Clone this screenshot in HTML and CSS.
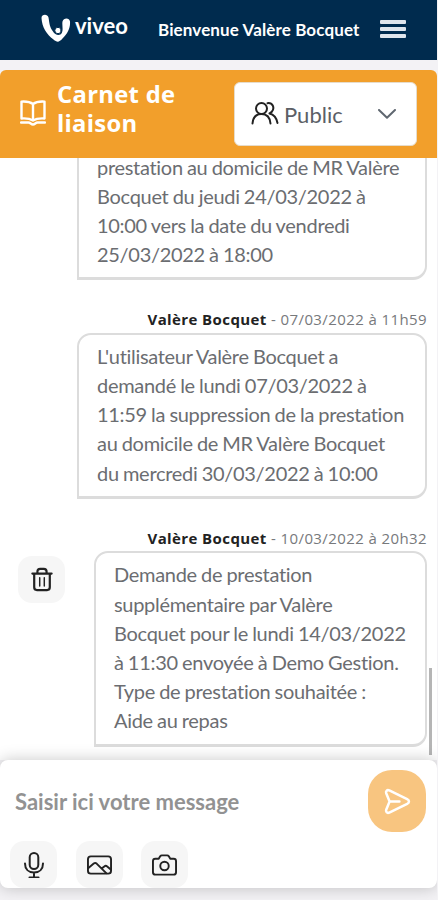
FILE: index.html
```html
<!DOCTYPE html>
<html lang="fr">
<head>
    <meta charset="UTF-8">
    <meta name="viewport" content="width=device-width, initial-scale=1.0">
    <title>Carnet de liaison</title>
    <link rel="stylesheet" href="styles.css">
</head>
<body>
    <div class="app">
        <header class="topbar">
            <div class="logo">
                <svg class="logo-mark" viewBox="0 0 30 28">
                    <path d="M0.500 4C0.500 0 6.500 -0.500 7.500 3.500C8.500 9 8.500 13 12 17.500C14 21.500 19.500 22 20.800 19C22.500 15.500 20.800 11 21.500 7.500C22.500 3.500 28.500 3.500 29 7.500C29.500 14 26.500 19.500 21.500 24.500C18 28.500 16 28.500 12.500 25.500C5.500 20.500 1 13 0.500 4Z"/>
                    <circle cx="17" cy="16.500" r="3.200"/>
                </svg>
                <span class="logo-text">viveo</span>
            </div>
            <span class="welcome">Bienvenue Valère Bocquet</span>
            <div class="burger"><i></i><i></i><i></i></div>
        </header>

        <section class="titlebar">
            <svg class="book" viewBox="0 0 26 26">
                <path d="M13 4C10 1.800 6 1.300 1.500 1.600V18.500C6 18.200 10 18.600 13 20.500C16 18.600 20 18.200 24.500 18.500V1.600C20 1.300 16 1.800 13 4V20"/>
                <path d="M1 22.500H8.500C10.500 22.500 11 24.500 13 24.500S15.500 22.500 17.500 22.500H25"/>
            </svg>
            <h1>Carnet de liaison</h1>
            <div class="select">
                <svg class="users" viewBox="0 0 28 24">
                    <circle cx="10.500" cy="7.500" r="5.500"/>
                    <path d="M1.500 22.500C2 17 5 13 10.500 13S19 17 19.500 22.500M16.500 2.200C21.500 1.500 24 6.500 21 10.500C20 11.700 19.500 12 18.500 12.500C23 13.500 25.500 17 26.500 22"/>
                </svg>
                <span>Public</span>
                <svg class="chevron" viewBox="0 0 18 10"><path d="M1 1L9 8.800L17 1"/></svg>
            </div>
        </section>

        <main class="messages">
            <div class="bubble">
                prestation au domicile de MR Valère<br>
                Bocquet du jeudi 24/03/2022 à<br>
                10:00 vers la date du vendredi<br>
                25/03/2022 à 18:00
            </div>

            <div class="meta"><b>Valère Bocquet</b> <span>- 07/03/2022 à 11h59</span></div>
            <div class="bubble">
                L'utilisateur Valère Bocquet a<br>
                demandé le lundi 07/03/2022 à<br>
                11:59 la suppression de la prestation<br>
                au domicile de MR Valère Bocquet<br>
                du mercredi 30/03/2022 à 10:00
            </div>

            <div class="meta"><b>Valère Bocquet</b> <span>- 10/03/2022 à 20h32</span></div>
            <div class="row">
                <button class="tool">
                    <svg class="trash" viewBox="0 0 24 26">
                        <path d="M1.500 6.500H22.500M3.500 6.500V21.500C3.500 23.500 4.500 24.500 6.500 24.500H17.500C19.500 24.500 20.500 23.500 20.500 21.500V6.500M7 6V4.500C7 2.500 8 1.500 10 1.500H14C16 1.500 17 2.500 17 4.500V6"/>
                        <path class="thin" d="M9.500 11V20M14.500 11V20"/>
                    </svg>
                </button>
                <div class="bubble">
                    Demande de prestation<br>
                    supplémentaire par Valère<br>
                    Bocquet pour le lundi 14/03/2022<br>
                    à 11:30 envoyée à Demo Gestion.<br>
                    Type de prestation souhaitée :<br>
                    Aide au repas
                </div>
            </div>
            <div class="scrollbar"></div>
        </main>

        <footer class="composer">
            <div class="input-row">
                <span class="placeholder">Saisir ici votre message</span>
                <button class="send">
                    <svg viewBox="0 0 28 28">
                        <path d="M5.500 2.500L24 11.500C26.500 12.800 26.500 15.200 24 16.500L5.500 25.500C3 26.500 1.500 24.500 2.300 22.500L5.800 14L2.300 5.500C1.500 3.500 3 1.500 5.500 2.500ZM6 14H16"/>
                    </svg>
                </button>
            </div>
            <div class="tools">
                <button class="tool">
                    <svg class="mic" viewBox="0 0 20 26">
                        <rect x="5.700" y="1" width="8.600" height="16" rx="4.300"/>
                        <path d="M1 11.500C1 17 4.500 20.500 10 20.500S19 17 19 11.500M10 20.500V25M5.500 25.500H14.500"/>
                    </svg>
                </button>
                <button class="tool">
                    <svg class="image" viewBox="0 0 26 20">
                        <rect x="1" y="1" width="24" height="18" rx="3"/>
                        <path d="M1.500 13L7 8.500C8 7.700 9 7.700 10 8.500L20 18.500M15.500 13.500L18 11.500C19 10.700 20 10.700 21 11.500L25 15"/>
                    </svg>
                </button>
                <button class="tool">
                    <svg class="camera" viewBox="0 0 26 22">
                        <path d="M1 7C1 5.500 2 4.500 3.500 4.500H7L8.500 2C9 1.300 9.500 1 10.200 1H15.800C16.500 1 17 1.300 17.500 2L19 4.500H22.500C24 4.500 25 5.500 25 7V18.500C25 20 24 21 22.500 21H3.500C2 21 1 20 1 18.500Z"/>
                        <circle cx="13" cy="12" r="4.400"/>
                    </svg>
                </button>
            </div>
        </footer>
    </div>
</body>
</html>
```

FILE: styles.css
```css
* {
    box-sizing: border-box;
}
body {
    margin: 0;
    background-color: #f3f2f5;
    font-family: Lato, sans-serif;
}
svg {
    display: block;
    flex: none;
    fill: none;
    stroke: #222;
    stroke-width: 2;
    stroke-linecap: round;
    stroke-linejoin: round;
}
button {
    border: 0;
    padding: 0;
    display: flex;
    align-items: center;
    justify-content: center;
}
.app {
    width: 437px;
    height: 900px;
    display: flex;
    flex-direction: column;
    overflow: hidden;
}

/* top bar */
.topbar {
    height: 60px;
    flex: none;
    display: flex;
    align-items: center;
    padding: 0 31px 0 41px;
    background-color: #002b4e;
    color: #fff;
}
.logo {
    display: flex;
    width: 117px;
    padding-bottom: 4px;
}
.logo-mark {
    width: 30px;
    height: 28px;
    stroke: none;
    fill: #fff;
}
.logo-mark circle {
    stroke: #002b4e;
    stroke-width: 1;
}
.logo-text {
    margin: 1px 0 0 4px;
    font-size: 22px;
    line-height: 22px;
    font-weight: 700;
}
.welcome {
    font-size: 17px;
    font-weight: 700;
    letter-spacing: 0.120px;
    margin-top: -1px;
    white-space: nowrap;
}
.burger {
    width: 26px;
    margin: -2px 0 0 auto;
    display: flex;
    flex-direction: column;
    gap: 3px;
}
.burger i {
    height: 4px;
    border-radius: 1px;
    background-color: #dfe5ec;
}

/* title */
.titlebar {
    height: 88px;
    flex: none;
    margin-top: 10px;
    padding: 0 20px;
    display: flex;
    align-items: center;
    background-color: #f29f2b;
    border-radius: 6px 6px 0 0;
}
.book {
    width: 26px;
    height: 26px;
    margin-top: -2px;
    stroke: #fff;
    stroke-width: 2.400;
}
.titlebar h1 {
    width: 177px;
    margin: -10px 0 0 11px;
    padding-right: 40px;
    color: #fff;
    font: 700 23.800px/29px "Open Sans", sans-serif;
    letter-spacing: 0.300px;
}
.select {
    width: 183px;
    height: 64px;
    display: flex;
    align-items: center;
    padding: 0 20px 0 16px;
    border-radius: 6px;
    background-color: #fff;
    border: 1px solid #e6dccb;
    color: #5c5f66;
    font-size: 22px;
}
.users {
    width: 28px;
    height: 24px;
    margin: -3px 5px 0 0;
}
.chevron {
    width: 18px;
    height: 10px;
    margin-left: auto;
    stroke: #5f6770;
}

/* messages */
.messages {
    position: relative;
    height: 602px;
    flex: none;
    padding: 0 10px;
    display: flex;
    flex-direction: column;
    align-items: flex-end;
    background-color: #fff;
    overflow: hidden;
}
.bubble {
    width: 350px;
    flex: none;
    padding: 7px 0 8px 18px;
    border: 2px solid #dcdcdc;
    border-bottom-width: 3px;
    border-radius: 14px 14px 14px 0;
    background-color: #fff;
    color: #6b6d71;
    font-size: 20px;
    line-height: 29.200px;
    letter-spacing: -0.300px;
    word-spacing: -0.600px;
    white-space: nowrap;
}
.messages > .bubble:first-child {
    margin-top: -14.500px;
}
.meta {
    margin-top: 29px;
    height: 23.500px;
    color: #77797c;
    font: 15px/21px "Open Sans", sans-serif;
    letter-spacing: 0.400px;
    white-space: nowrap;
}
.meta b {
    color: #222;
}
.row {
    width: 100%;
    display: flex;
    justify-content: space-between;
    padding-left: 8px;
}
.row .bubble {
    width: 333px;
}
.row .tool {
    margin-top: 5px;
}
.tool {
    width: 47px;
    height: 47px;
    border-radius: 14px;
    background-color: #f6f6f6;
}
.trash {
    width: 22px;
    height: 25px;
    stroke-width: 2.400;
}
.trash .thin {
    stroke-width: 1.600;
}
.scrollbar {
    position: absolute;
    right: 5px;
    bottom: 5px;
    width: 3px;
    height: 87px;
    background-color: #b5b5b5;
}

/* composer */
.composer {
    position: relative;
    height: 128px;
    flex: none;
    padding: 10px 11px 0 10px;
    border-radius: 8px;
    background-color: #fff;
    box-shadow: 0 0 16px rgba(0, 0, 0, 0.220);
}
.input-row {
    display: flex;
    align-items: center;
    justify-content: space-between;
}
.placeholder {
    padding-left: 5px;
    color: #929292;
    font-size: 22px;
    font-weight: 700;
}
.send {
    width: 58px;
    height: 62px;
    border-radius: 24px;
    background-color: #f8c580;
}
.send svg {
    width: 27px;
    height: 27px;
    stroke: #fff;
    stroke-width: 2.600;
}
.tools {
    display: flex;
    gap: 18.500px;
    margin-top: 9px;
}
.mic {
    width: 20px;
    height: 26px;
}
.image {
    width: 25px;
    height: 20px;
}
.camera {
    width: 25px;
    height: 22px;
}
```
